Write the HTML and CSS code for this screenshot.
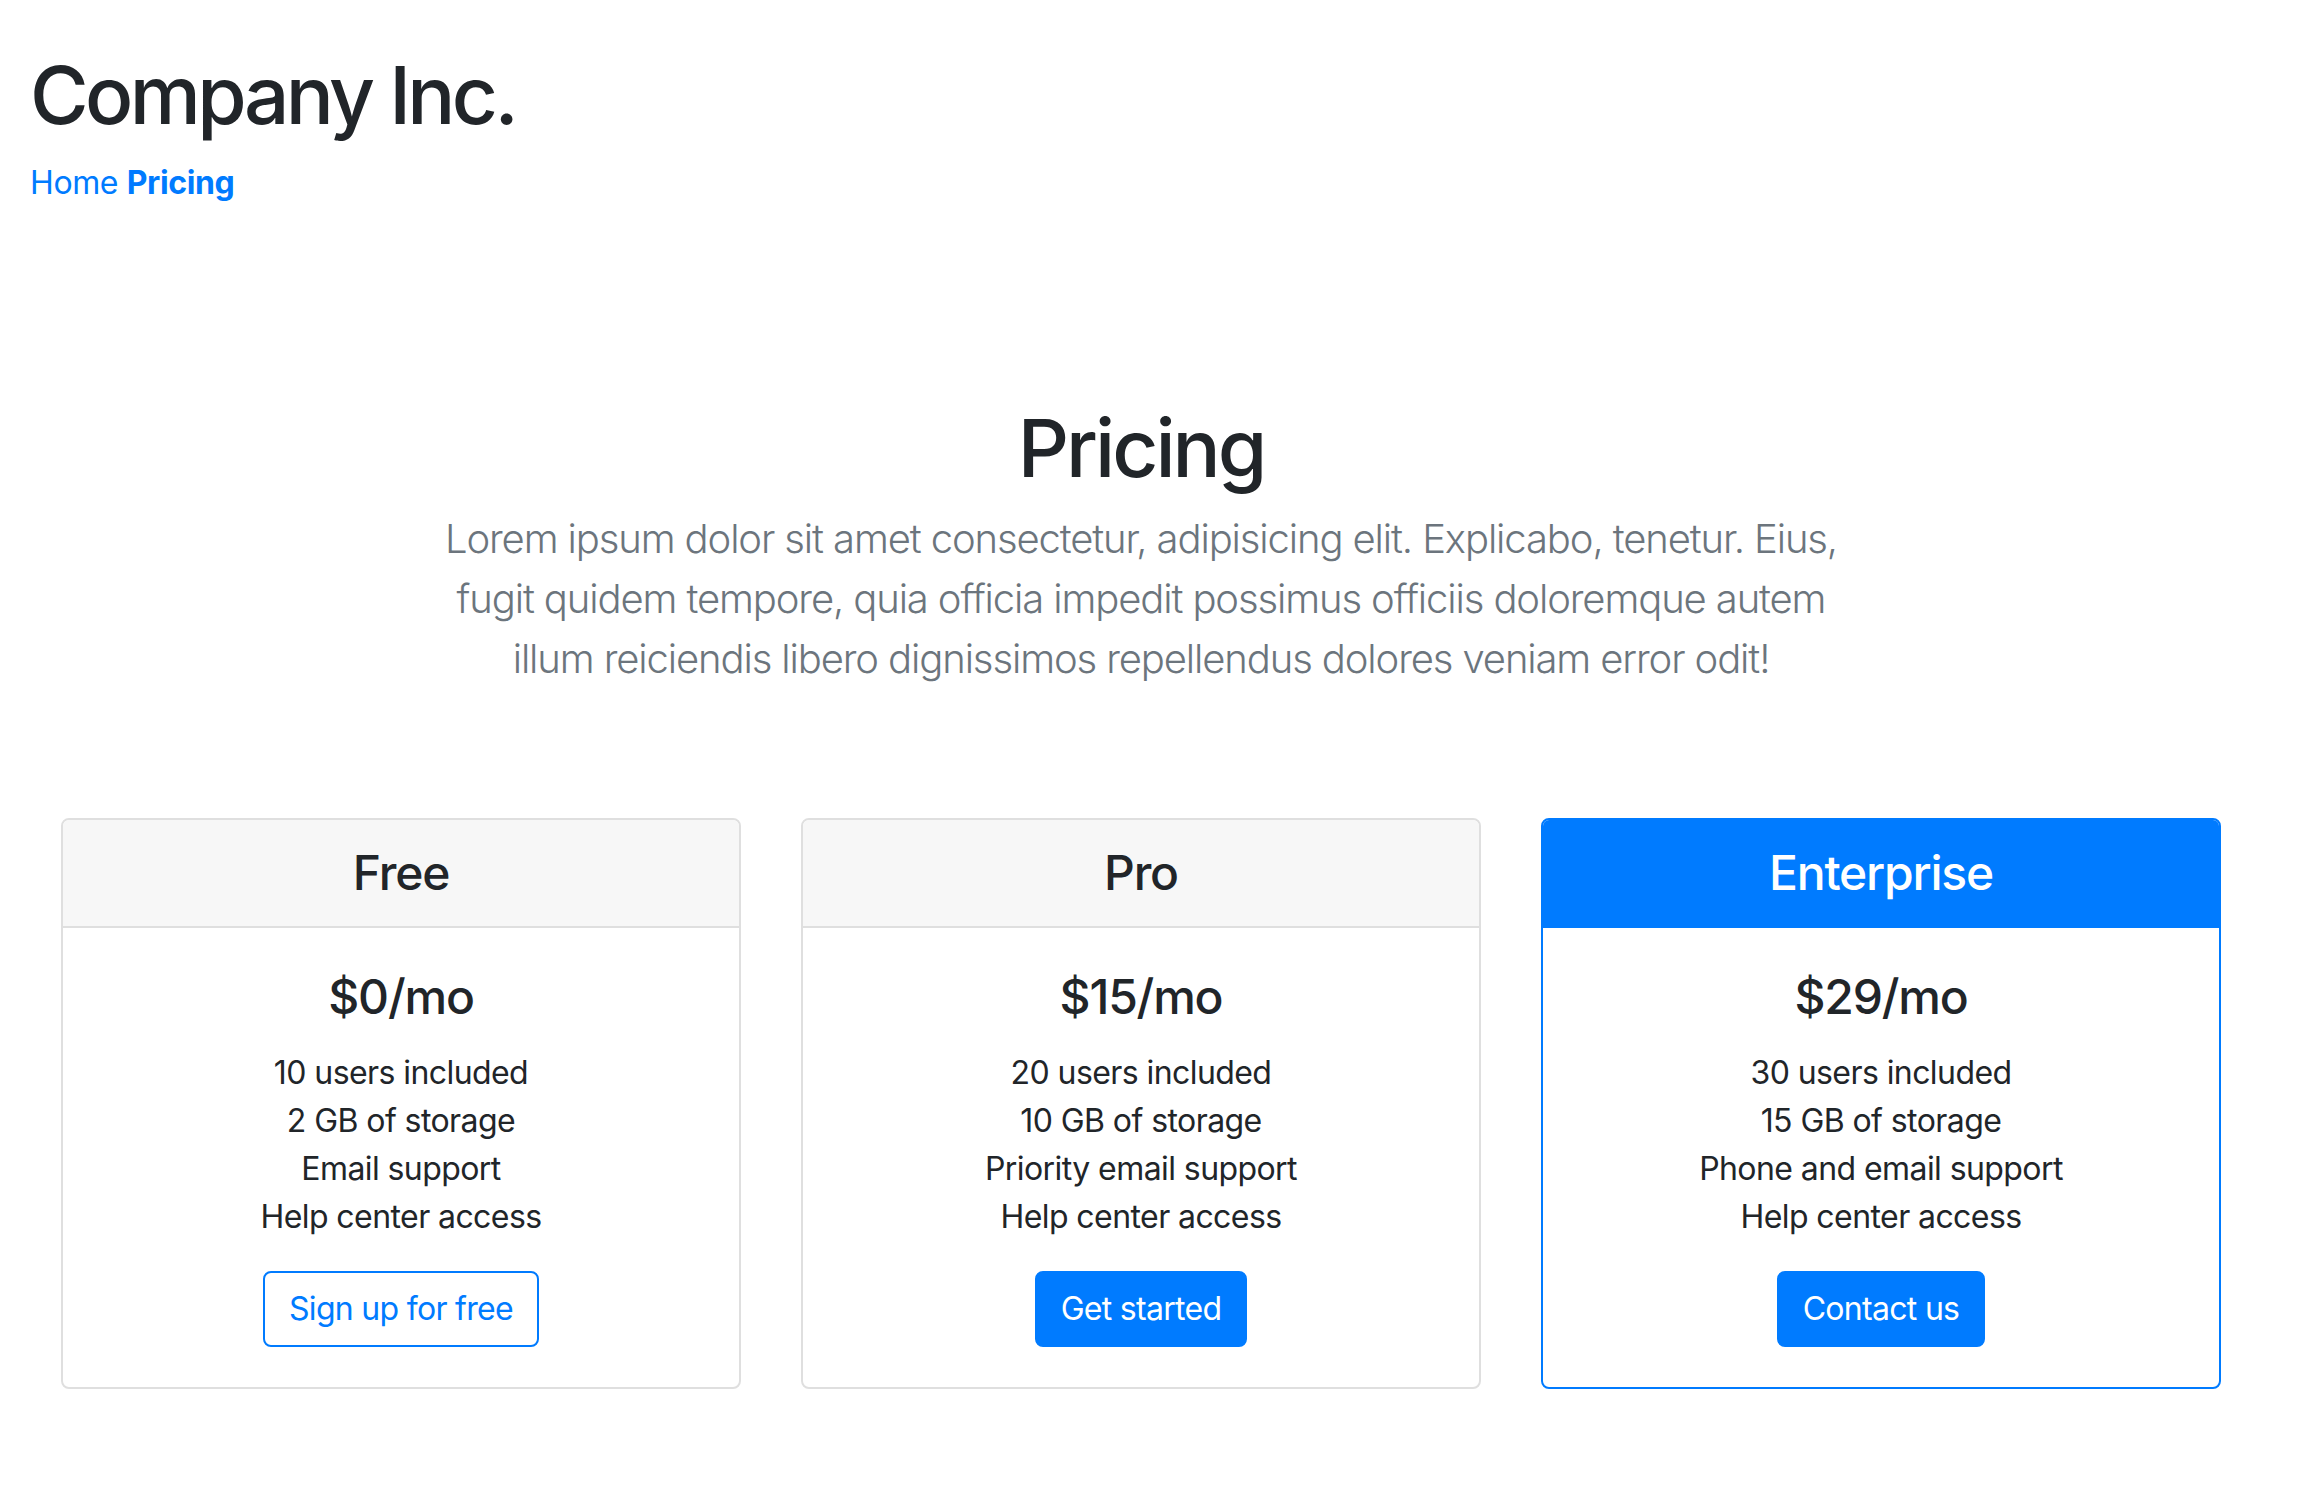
FILE: index.html
```html
<!DOCTYPE html>
<html lang="en">
<head>
<meta charset="utf-8">
<title>Pricing - Company Inc.</title>
<link rel="stylesheet" href="styles.css">
</head>
<body>
<div class="page">
  <header class="site-header">
    <h1 class="brand">Company Inc.</h1>
    <nav class="site-nav">
      <a href="#" class="nav-link">Home</a>
      <a href="#" class="nav-link active">Pricing</a>
    </nav>
  </header>

  <section class="pricing-header">
    <h1 class="pricing-title">Pricing</h1>
    <p class="lead">Lorem ipsum dolor sit amet consectetur, adipisicing elit. Explicabo, tenetur. Eius, fugit quidem tempore, quia officia impedit possimus officiis doloremque autem illum reiciendis libero dignissimos repellendus dolores veniam error odit!</p>
  </section>

  <section class="card-deck">
    <div class="card">
      <div class="card-header"><h4 class="plan-name">Free</h4></div>
      <div class="card-body">
        <h1 class="price">$0/mo</h1>
        <ul class="features">
          <li>10 users included</li>
          <li>2 GB of storage</li>
          <li>Email support</li>
          <li>Help center access</li>
        </ul>
        <a href="#" class="btn btn-outline">Sign up for free</a>
      </div>
    </div>
    <div class="card">
      <div class="card-header"><h4 class="plan-name">Pro</h4></div>
      <div class="card-body">
        <h1 class="price">$15/mo</h1>
        <ul class="features">
          <li>20 users included</li>
          <li>10 GB of storage</li>
          <li>Priority email support</li>
          <li>Help center access</li>
        </ul>
        <a href="#" class="btn btn-primary">Get started</a>
      </div>
    </div>
    <div class="card card-primary">
      <div class="card-header"><h4 class="plan-name">Enterprise</h4></div>
      <div class="card-body">
        <h1 class="price">$29/mo</h1>
        <ul class="features">
          <li>30 users included</li>
          <li>15 GB of storage</li>
          <li>Phone and email support</li>
          <li>Help center access</li>
        </ul>
        <a href="#" class="btn btn-primary">Contact us</a>
      </div>
    </div>
  </section>
</div>
</body>
</html>
```

FILE: styles.css
```css
* { box-sizing: border-box; }

html, body {
  margin: 0;
  padding: 0;
  background: #ffffff;
}

body {
  font-family: Inter, "Noto Sans", "Liberation Sans", sans-serif;
  color: #212529;
  font-size: 32px;
  line-height: 48px;
}

.page {
  width: 2282px;
  padding-bottom: 80px;
}

.site-header {
  padding: 47px 30px 0;
}

.brand {
  margin: 0 0 16px;
  font-size: 80px;
  line-height: 96px;
  font-weight: 500;
  letter-spacing: -0.045em;
}

.site-nav {
  font-size: 32px;
  line-height: 48px;
  letter-spacing: -0.012em;
}

.nav-link {
  color: #007bff;
  text-decoration: none;
}

.nav-link.active {
  font-weight: 700;
}

.pricing-header {
  margin-top: 193px;
  text-align: center;
}

.pricing-title {
  margin: 0 0 13px;
  font-size: 80px;
  line-height: 96px;
  font-weight: 500;
  letter-spacing: -0.037em;
}

.lead {
  margin: 0 auto;
  max-width: 1410px;
  font-size: 40px;
  line-height: 60px;
  font-weight: 300;
  color: #6c757d;
  letter-spacing: -0.028em;
}

.card-deck {
  margin-top: 129px;
  padding: 0 61px;
  display: grid;
  grid-template-columns: repeat(3, 1fr);
  gap: 60px;
}

.card {
  border: 2px solid #dfdfdf;
  border-radius: 8px;
  overflow: hidden;
  display: flex;
  flex-direction: column;
  text-align: center;
}

.card-header {
  background: #f7f7f7;
  border-bottom: 2px solid #dfdfdf;
  padding: 24px 40px;
}

.plan-name {
  margin: 0;
  font-size: 48px;
  line-height: 58px;
  font-weight: 500;
  letter-spacing: -0.025em;
}

.card-primary {
  border-color: #007bff;
}

.card-primary .card-header {
  background: #007bff;
  border-bottom-color: #007bff;
  color: #ffffff;
}

.card-body {
  flex: 1;
  padding: 40px;
}

.price {
  margin: 0 0 23px;
  font-size: 48px;
  line-height: 58px;
  font-weight: 500;
  letter-spacing: -0.025em;
}

.features {
  list-style: none;
  margin: 0 0 30px;
  padding: 0;
  font-size: 32px;
  line-height: 48px;
  letter-spacing: -0.018em;
}

.btn {
  display: inline-block;
  padding: 12px 24px;
  font-size: 32px;
  line-height: 48px;
  border: 2px solid #007bff;
  border-radius: 8px;
  text-decoration: none;
  letter-spacing: -0.022em;
}

.btn-outline {
  color: #007bff;
  background: transparent;
}

.btn-primary {
  color: #ffffff;
  background: #007bff;
}
```
